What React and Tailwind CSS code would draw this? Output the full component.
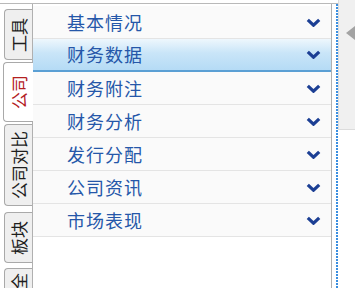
import React from "react";

const items = ["基本情况", "财务数据", "财务附注", "财务分析", "发行分配", "公司资讯", "市场表现"];

const tabs = [
  { label: "工具", h: "h-[51px]", mt: "mt-[5px]" },
  { label: "公司", h: "h-[60px]", mt: "mt-[2px]", active: true },
  { label: "公司对比", h: "h-[82px]", mt: "mt-[2px]" },
  { label: "板块", h: "h-[51px]", mt: "mt-[6px]" },
];

function Chevron() {
  return (
    <svg width="15" height="9" viewBox="0 0 15 9" className="shrink-0">
      <path d="M1.8 1.8 L7.5 7.2 L13.2 1.8" fill="none" stroke="#1c3f94" strokeWidth="3.2" />
    </svg>
  );
}

export default function App() {
  return (
    <div className="w-[355px] h-[288px] bg-white flex overflow-hidden font-['Noto_Sans_CJK_SC',sans-serif]">
      {/* 左边：页签 + 列表 */}
      <div className="w-[338px] flex flex-col pt-[3px]">
        <div className="flex-1 flex border-t border-[#b9b9b9] min-h-0">
          {/* 竖排页签 */}
          <div className="w-[32px] flex flex-col items-end shrink-0">
            {tabs.map((t) => (
              <div
                key={t.label}
                className={
                  t.active
                    ? `${t.h} ${t.mt} w-[30px] -mr-px z-10 bg-white border border-r-0 border-[#a9a9a9] rounded-l-[4px] flex items-center justify-center shrink-0`
                    : `${t.h} ${t.mt} w-[28px] bg-[#efefef] border border-r-0 border-[#a9a9a9] rounded-l-[4px] flex items-center justify-center shrink-0`
                }
              >
                <span
                  className={`[writing-mode:vertical-rl] [text-orientation:sideways] rotate-180 text-[17px] leading-[20px] ${
                    t.active ? "text-[#b3201f]" : "text-[#1e1e1e]"
                  }`}
                >
                  {t.label}
                </span>
              </div>
            ))}
            {/* 最后一个页签，只露出上半截 */}
            <div className="h-[40px] mt-[5px] w-[28px] bg-[#efefef] border border-r-0 border-b-0 border-[#a9a9a9] rounded-tl-[4px] flex justify-center pt-[3px] shrink-0">
              <span className="[writing-mode:vertical-rl] [text-orientation:sideways] rotate-180 text-[17px] leading-[20px] text-[#1e1e1e] h-[18px] overflow-hidden">
                全
              </span>
            </div>
          </div>

          {/* 菜单列表 */}
          <div className="w-[300px] border-l border-r border-[#b0b0b0] pt-[2px] bg-white">
            {items.map((it, i) =>
              i === 1 ? (
                <div
                  key={it}
                  className="h-[33px] flex items-center justify-between pl-[34px] pr-[10px] bg-[linear-gradient(to_bottom,#eef7fd,#c9e5f8_45%,#b5dbf5)] border-b-2 border-[#5a9fd4]"
                >
                  <span className="text-[18px] tracking-[1px] text-[#2557a9]">{it}</span>
                  <Chevron />
                </div>
              ) : (
                <div
                  key={it}
                  className="h-[33px] flex items-center justify-between pl-[34px] pr-[10px] bg-[#fafafa] border-b border-[#e4e4e4]"
                >
                  <span className="text-[18px] tracking-[1px] text-[#2557a9]">{it}</span>
                  <Chevron />
                </div>
              )
            )}
          </div>

          <div className="w-[4px]" />
          {/* 分隔点线 */}
          <div className="w-[2px] bg-[linear-gradient(to_bottom,#3b8fe0_66%,transparent_66%)] bg-[length:2px_3px]" />
        </div>
      </div>

      {/* 右侧折叠区 */}
      <div className="flex-1 h-[130px] bg-[#f0f0f0] border-l border-b border-[#dcdcdc] pt-[26px] pl-[7px]">
        <div className="w-0 h-0 border-y-[7px] border-y-transparent border-r-[9px] border-r-[#a3a3a3]" />
      </div>
    </div>
  );
}
